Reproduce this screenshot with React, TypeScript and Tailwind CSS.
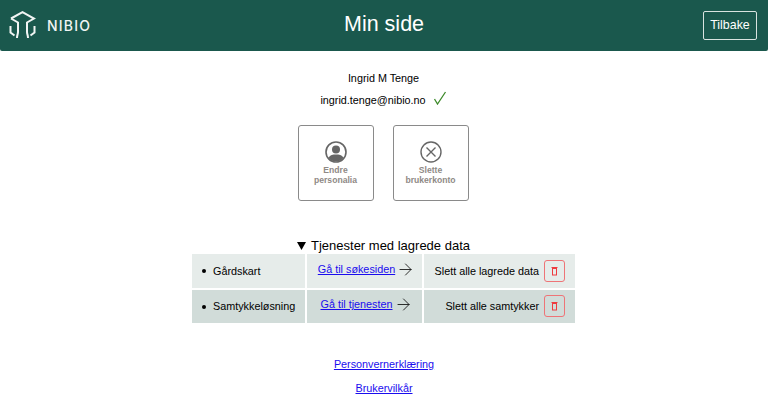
import { ArrowRight } from "lucide-react";

function NibioLogo() {
  return (
    <svg width="27" height="29" viewBox="0 0 27 29" fill="none" stroke="#f1f5f4" strokeWidth="2" className="shrink-0">
      <path d="M2 7.5 L13.5 1.2 L25 7.5 L18 11.5 V21 C18 23 19 24 19 27" />
      <path d="M2 7.5 L9 11.5 V21 C9 23 8 24 8 27" />
      <path d="M1.5 15 V21.5 L5.5 24.5" />
      <path d="M25.5 15 V21.5 L21.5 24.5" />
    </svg>
  );
}

function TrashButton() {
  return (
    <button className="w-[21px] h-[22px] rounded-[3px] border border-[#ee7477] flex items-center justify-center shrink-0">
      <svg width="7" height="10" viewBox="0 0 7 10" fill="none">
        <rect x="1.5" y="2.5" width="4" height="6.5" stroke="#ee3b40" strokeWidth="1" />
        <path d="M.5 1.5H6.5" stroke="#ee3b40" strokeWidth="1" />
      </svg>
    </button>
  );
}

function TileButton({ icon, lines }: { icon: React.ReactNode; lines: string[] }) {
  return (
    <button className="w-[76px] h-[76px] rounded-[3px] border border-[#8a8a8a] flex flex-col items-center pt-[15px] bg-white">
      {icon}
      <span className="mt-[2px] text-[8.6px] leading-[10px] font-bold text-[#8f8a86]">
        {lines.map((l) => (
          <span key={l} className="block">{l}</span>
        ))}
      </span>
    </button>
  );
}

const rows = [
  { name: "Gårdskart", link: "Gå til søkesiden", action: "Slett alle lagrede data", bg: "bg-[#e6ecea]", h: "h-[34px]", pad: "pt-[8px] pl-[4px]", btn: "" },
  { name: "Samtykkeløsning", link: "Gå til tjenesten", action: "Slett alle samtykker", bg: "bg-[#d1dcd9]", h: "h-[33px]", pad: "pt-[7px] pl-[4px]", btn: "-mt-[1px]" },
];

export default function App() {
  return (
    <div className="w-[768px] h-[408px] overflow-hidden bg-white font-['Liberation_Sans',Arial,sans-serif] text-black">
      <header className="h-[51px] bg-[#1a584d] rounded-b-[2px] flex items-center justify-between pl-[9px] pr-[11px] relative">
        <div className="flex items-center gap-[11px]">
          <NibioLogo />
          <span className="text-[14px] tracking-[1.2px] font-['Inter',sans-serif] font-medium text-[#f1f5f4]">NIBIO</span>
        </div>
        <h1 className="text-[21.5px] text-white absolute left-[344px] top-[10px] leading-[28px]">Min side</h1>
        <button className="w-[54px] h-[29px] rounded-[2px] border border-[#d8e3e0] text-white text-[12.4px]">Tilbake</button>
      </header>

      <main className="flex flex-col items-center">
        <p className="mt-[20px] text-[10.8px] leading-[14px] ml-[-1px]">Ingrid M Tenge</p>
        <div className="mt-[7px] flex items-center gap-[7px] h-[16px] text-[10.8px] ml-[-1px]">
          <span>ingrid.tenge@nibio.no</span>
          <svg width="14" height="14" viewBox="0 0 14 14" fill="none" stroke="#3d8a2a" strokeWidth="1.3" className="-mt-[4px]">
            <path d="M1.5 8 L4.5 13 L12.5 1" />
          </svg>
        </div>

        <div className="mt-[17px] flex gap-[19px] ml-[-2px]">
          <TileButton
            lines={["Endre", "personalia"]}
            icon={
              <svg width="22" height="22" viewBox="0 0 22 22">
                <circle cx="11" cy="11" r="10" fill="none" stroke="#666" strokeWidth="1.6" />
                <circle cx="11" cy="8.5" r="4" fill="#666" />
                <path d="M3.5 17 C5 13.8 8 13.5 11 13.5 S17 13.8 18.5 17 C16.5 19.5 14 20.5 11 20.5 S5.5 19.5 3.5 17Z" fill="#666" />
              </svg>
            }
          />
          <TileButton
            lines={["Slette", "brukerkonto"]}
            icon={
              <svg width="22" height="22" viewBox="0 0 22 22" fill="none" stroke="#666" strokeWidth="1.4">
                <circle cx="11" cy="11" r="10" />
                <path d="M6.5 6.5 L15.5 15.5 M15.5 6.5 L6.5 15.5" />
              </svg>
            }
          />
        </div>

        <div className="mt-[37px] h-[16px] flex items-center gap-[5px] text-[13px] leading-[16px] ml-[-1px]">
          <svg width="9" height="8" viewBox="0 0 9 8" className="shrink-0"><path d="M0 0H9L4.5 8Z" fill="#000" /></svg>
          <span>Tjenester med lagrede data</span>
        </div>

        <div className="w-[383px] flex flex-col gap-[2px] text-[10.8px] ml-[-1px]">
          {rows.map((r) => (
            <div key={r.name} className={`${r.h} grid grid-cols-[113px_115px_151px] gap-[2px]`}>
              <div className={`${r.bg} flex items-center pl-[10px]`}>
                <span className="w-[4px] h-[4px] rounded-full bg-black mr-[7px]" />
                {r.name}
              </div>
              <div className={`${r.bg} flex items-start justify-center ${r.pad} gap-[1px]`}>
                <a href="#" className="text-[#1a0dee] underline leading-[14px]">{r.link}</a>
                <ArrowRight size={19} strokeWidth={1.1} className="text-[#111] -mt-[2px]" />
              </div>
              <div className={`${r.bg} flex items-center justify-end pr-[10px] gap-[5px]`}>
                {r.action}
                <span className={r.btn}><TrashButton /></span>
              </div>
            </div>
          ))}
        </div>

        <a href="#" className="mt-[34px] text-[10.8px] leading-[14px] text-[#1a0dee] underline">Personvernerklæring</a>
        <a href="#" className="mt-[10px] text-[10.8px] leading-[14px] text-[#1a0dee] underline">Brukervilkår</a>
      </main>
    </div>
  );
}
